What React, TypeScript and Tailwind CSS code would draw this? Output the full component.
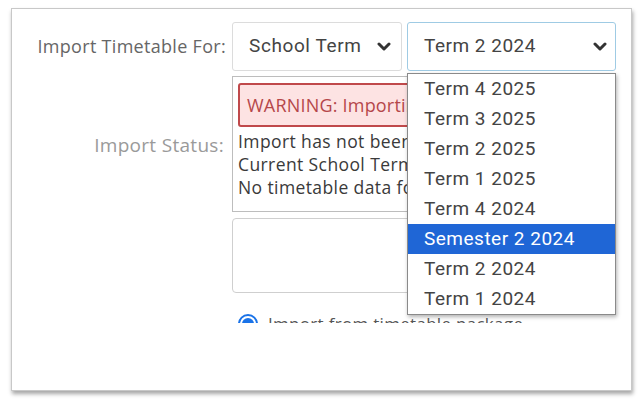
import React from 'react';

const terms = [
  'Term 4 2025',
  'Term 3 2025',
  'Term 2 2025',
  'Term 1 2025',
  'Term 4 2024',
  'Semester 2 2024',
  'Term 2 2024',
  'Term 1 2024',
];

const Chevron = () => (
  <svg width="14" height="10" viewBox="0 0 14 10" className="shrink-0">
    <polyline points="2,2 7,7 12,2" fill="none" stroke="#333" strokeWidth="3" strokeLinecap="round" strokeLinejoin="round" />
  </svg>
);

const App = () => {
  return (
    <div className="w-[642px] h-[406px] bg-white pt-[8px] pl-[11px] font-['Open_Sans',sans-serif]">
      <div className="w-[621px] h-[383px] bg-white border border-[#c8c8c8] shadow-[1px_3px_4px_rgba(0,0,0,0.35)]">
        <div className="h-[314px] overflow-hidden pt-[13px]">
          {/* row 1 */}
          <div className="flex items-stretch">
            <div className="w-[216px] text-right pr-[2px] text-[18px] tracking-[0.3px] text-[#666] leading-[49px] whitespace-nowrap">Import Timetable For:</div>
            <div className="ml-[4px] w-[170px] h-[49px] rounded-[3px] border border-[#dcdcdc] flex items-center justify-between pl-[16px] pr-[10px] font-['Roboto',sans-serif] text-[19px] tracking-[0.6px] text-[#444]">
              <span>School Term</span>
              <Chevron />
            </div>
            <div className="relative ml-[5px] w-[209px] h-[49px]">
              <div className="h-full rounded-[3px] border border-[#9fcbe4] flex items-center justify-between pl-[16px] pr-[8px] font-['Roboto',sans-serif] text-[19px] tracking-[0.5px] text-[#444]">
                <span>Term 2 2024</span>
                <Chevron />
              </div>
              <div className="absolute z-10 left-0 top-[51px] w-[209px] bg-white border border-[#8a8a8a] shadow-[1px_2px_4px_rgba(0,0,0,0.3)] font-['Roboto',sans-serif] text-[19px] tracking-[0.5px] text-[#444]">
                {terms.map((t) => (
                  <div
                    key={t}
                    className={
                      t === 'Semester 2 2024'
                        ? 'h-[30px] leading-[30px] pl-[16px] bg-[#1f66d6] text-white'
                        : 'h-[30px] leading-[30px] pl-[16px]'
                    }
                  >
                    {t}
                  </div>
                ))}
              </div>
            </div>
          </div>

          {/* row 2 */}
          <div className="flex mt-[5px]">
            <div className="w-[216px] text-right pr-[4px] pt-[55px] text-[19px] tracking-[0.3px] text-[#9a9a9a] whitespace-nowrap">Import Status:</div>
            <div className="ml-[4px] w-[384px] h-[136px] border border-[#bdbdbd] px-[5px] pt-[6px] text-[17.5px] tracking-[0.4px] text-[#3a3a3a] whitespace-nowrap overflow-hidden">
              <div className="h-[44px] rounded-[3px] border-2 border-[#c0494b] bg-[#fde3e3] text-[#b5474a] text-[18px] tracking-[0.2px] flex items-center pl-[7px]">
                WARNING: Importing a timetable will overwrite existing data
              </div>
              <div className="leading-[23px] mt-[3px]">Import has not been run for this term</div>
              <div className="leading-[23px]">Current School Term: Term 2 2024</div>
              <div className="leading-[23px]">No timetable data found for this term</div>
            </div>
          </div>

          {/* row 3 */}
          <div className="flex mt-[6px]">
            <div className="w-[216px]" />
            <div className="ml-[4px] w-[384px] h-[75px] rounded-[4px] border border-[#cfcfcf]" />
          </div>

          {/* row 4 */}
          <div className="flex items-center mt-[18px]">
            <div className="w-[216px]" />
            <div className="ml-[10px] w-[20px] h-[20px] rounded-full border-2 border-[#1a73e8] flex items-center justify-center">
              <div className="w-[12px] h-[12px] rounded-full bg-[#1a73e8]" />
            </div>
            <span className="ml-[10px] text-[17px] tracking-[0.3px] text-[#555]">Import from timetable package</span>
          </div>
        </div>
      </div>
    </div>
  );
};

export default App;
